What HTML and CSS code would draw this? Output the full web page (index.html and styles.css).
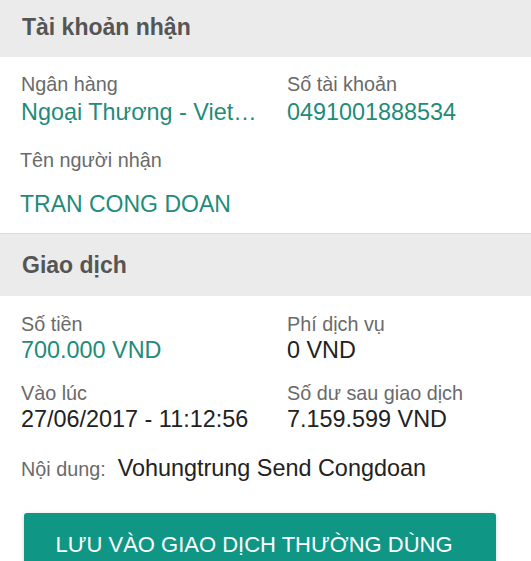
FILE: index.html
```html
<!DOCTYPE html>
<html lang="vi">
<head>
<meta charset="utf-8">
<title>Giao dịch</title>
<link rel="stylesheet" href="styles.css">
</head>
<body>
  <div class="section-head first">Tài khoản nhận</div>
  <div class="section">
    <div class="grid">
      <div class="cell">
        <div class="label">Ngân hàng</div>
        <div class="value green">Ngoại Thương - Viet…</div>
      </div>
      <div class="cell">
        <div class="label">Số tài khoản</div>
        <div class="value green">0491001888534</div>
      </div>
    </div>
    <div class="recipient">
      <div class="label">Tên người nhận</div>
      <div class="value green name">TRAN CONG DOAN</div>
    </div>
  </div>
  <div class="section-head second">Giao dịch</div>
  <div class="section tx">
    <div class="grid">
      <div class="cell">
        <div class="label">Số tiền</div>
        <div class="value green">700.000 VND</div>
      </div>
      <div class="cell">
        <div class="label">Phí dịch vụ</div>
        <div class="value">0 VND</div>
      </div>
    </div>
    <div class="grid row2">
      <div class="cell">
        <div class="label">Vào lúc</div>
        <div class="value">27/06/2017 - 11:12:56</div>
      </div>
      <div class="cell">
        <div class="label">Số dư sau giao dịch</div>
        <div class="value">7.159.599 VND</div>
      </div>
    </div>
    <div class="content">
      <span class="label inline">Nội dung:</span>
      <span class="value">Vohungtrung Send Congdoan</span>
    </div>
    <button class="save">LƯU VÀO GIAO DỊCH THƯỜNG DÙNG</button>
  </div>
</body>
</html>
```

FILE: styles.css
```css
html, body {
  margin: 0;
  padding: 0;
  background: #ffffff;
  font-family: "Liberation Sans", Arial, Helvetica, sans-serif;
  overflow: hidden;
}

.section-head {
  background: #ebebeb;
  color: #555555;
  font-weight: bold;
  font-size: 23px;
  padding-left: 22px;
}

.section-head.first {
  height: 57px;
  line-height: 54px;
  box-sizing: border-box;
}

.section-head.second {
  height: 63px;
  line-height: 62px;
  border-top: 1px solid #dadada;
  box-sizing: border-box;
}

.section {
  padding: 15px 0 14px 21px;
}

.section.tx {
  padding: 16px 0 0 21px;
}

.grid {
  display: grid;
  grid-template-columns: 266px 1fr;
}

.grid.row2 {
  margin-top: 16px;
}

.cell {
  min-width: 0;
}

.label {
  color: #6a6a6a;
  font-size: 19.8px;
  line-height: 25px;
  white-space: nowrap;
}

.tx .label {
  line-height: 24px;
}

.value {
  color: #222222;
  font-size: 23.4px;
  line-height: 30px;
  white-space: nowrap;
}

.tx .grid .value {
  line-height: 29px;
}

.green {
  color: #1f8b79;
}

.green.digits {
  letter-spacing: 0.3px;
}

.recipient {
  margin-top: 21px;
  margin-left: -1px;
}

.recipient .name {
  margin-top: 16px;
  font-size: 23px;
}

.content {
  margin-top: 19px;
  display: flex;
  align-items: baseline;
  gap: 12px;
  line-height: 30px;
}

.label.inline {
  line-height: 30px;
}

.save {
  display: block;
  margin: 29px 0 0 3px;
  width: 472px;
  padding: 18px 12px 14px 0;
  border: none;
  border-radius: 3px;
  background: #0f9685;
  color: #ffffff;
  font-family: "Liberation Sans", Arial, Helvetica, sans-serif;
  font-size: 22px;
  line-height: 28px;
  text-align: center;
  box-shadow: 0 1px 4px rgba(0, 0, 0, 0.18);
}
```
